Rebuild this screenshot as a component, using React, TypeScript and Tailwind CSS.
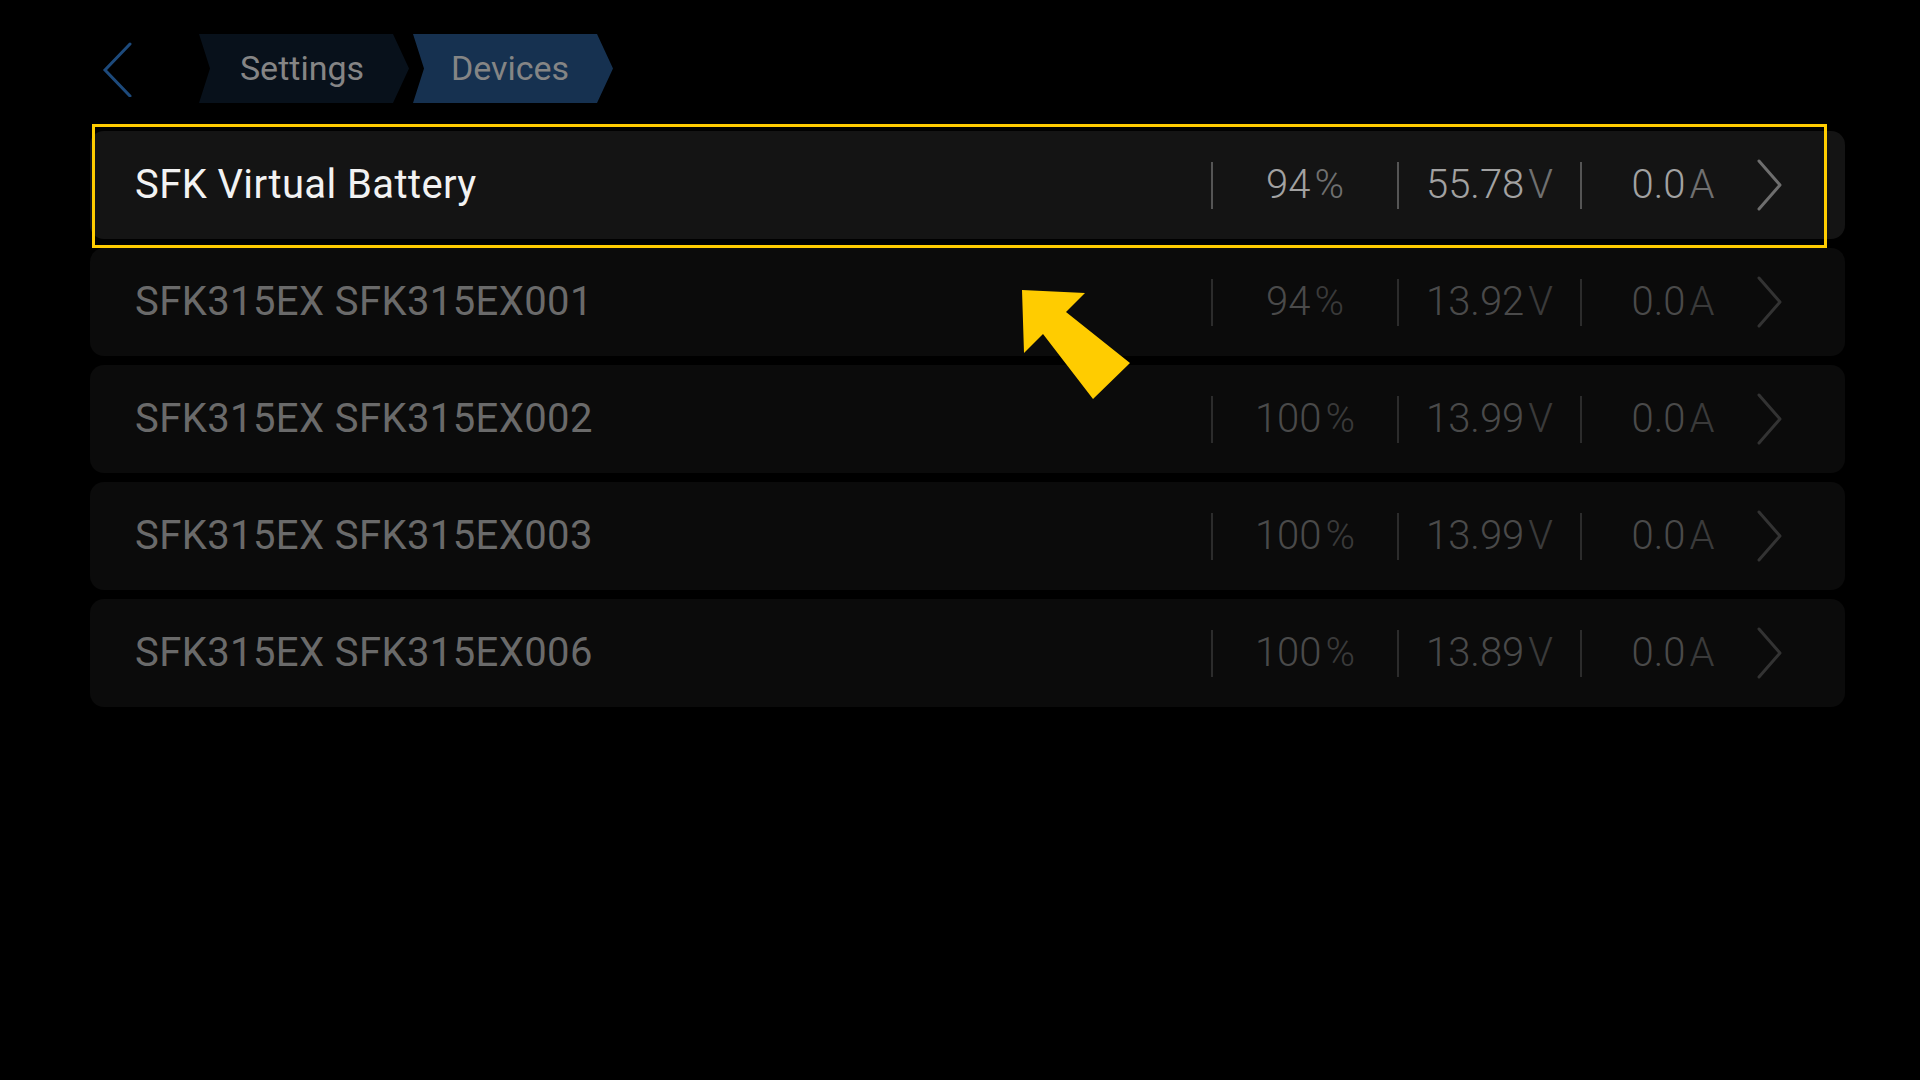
const devices = [
  { name: 'SFK Virtual Battery', soc: '94', volt: '55.78', amp: '0.0', active: true },
  { name: 'SFK315EX SFK315EX001', soc: '94', volt: '13.92', amp: '0.0', active: false },
  { name: 'SFK315EX SFK315EX002', soc: '100', volt: '13.99', amp: '0.0', active: false },
  { name: 'SFK315EX SFK315EX003', soc: '100', volt: '13.99', amp: '0.0', active: false },
  { name: 'SFK315EX SFK315EX006', soc: '100', volt: '13.89', amp: '0.0', active: false },
];

type Device = (typeof devices)[number];

function Value({ num, unit, active }: { num: string; unit: string; active: boolean }) {
  return (
    <span className="font-light">
      <span className={active ? 'text-[#a2a2a2]' : 'text-[#4a4a4a]'}>{num}</span>
      <span className={active ? 'ml-[4px] text-[#707070]' : 'ml-[4px] text-[#3a3a3a]'}>{unit}</span>
    </span>
  );
}

function DeviceRow({ d }: { d: Device }) {
  const sep = d.active ? 'border-[#555555]' : 'border-[#2c2c2c]';
  return (
    <div
      className={
        'flex items-center h-[108px] rounded-[14px] ' + (d.active ? 'bg-[#141414]' : 'bg-[#0b0b0b]')
      }
    >
      <div
        className={
          'flex-1 pl-[45px] text-[40px] tracking-[0.4px] ' + (d.active ? 'text-[#f2f2f2]' : 'text-[#6a6a6a]')
        }
      >
        {d.name}
      </div>
      <div className={'w-[186px] h-[47px] border-l-2 flex items-center justify-center text-[40px] ' + sep}>
        <Value num={d.soc} unit="%" active={d.active} />
      </div>
      <div className={'w-[183px] h-[47px] border-l-2 flex items-center justify-center text-[40px] ' + sep}>
        <Value num={d.volt} unit="V" active={d.active} />
      </div>
      <div className={'w-[176px] h-[47px] border-l-2 flex items-center justify-center pl-[8px] text-[40px] ' + sep}>
        <Value num={d.amp} unit="A" active={d.active} />
      </div>
      <svg width="27" height="54" viewBox="0 0 27 54" className="mr-[62px]">
        <path
          d="M3 3 L24 27 L3 51"
          fill="none"
          stroke={d.active ? '#6e6e6e' : '#333333'}
          strokeWidth="3"
          strokeLinecap="round"
          strokeLinejoin="round"
        />
      </svg>
    </div>
  );
}

export default function App() {
  return (
    <div className="relative w-full h-[1080px] bg-black overflow-hidden font-['Roboto','Liberation_Sans',sans-serif]">
      {/* Header — back + breadcrumbs */}
      <div className="flex items-center h-[69px] mt-[34px]">
        <button className="ml-[100px] w-[36px] h-[69px] flex items-center">
          <svg width="36" height="56" viewBox="0 0 36 56">
            <path d="M30 3 L5 29 L30 55" fill="none" stroke="#1d4a7c" strokeWidth="3" strokeLinecap="round" />
          </svg>
        </button>
        <div className="ml-[63px] flex items-center">
          <div className="w-[210px] h-[69px] bg-[#08111b] flex items-center justify-center pr-[4px] text-[34px] text-[#858585] [clip-path:polygon(0_0,calc(100%_-_16px)_0,100%_50%,calc(100%_-_16px)_100%,0_100%,11px_50%)]">
            Settings
          </div>
          <div className="ml-[4px] w-[200px] h-[69px] bg-[#163150] flex items-center justify-center pr-[6px] text-[34px] text-[#858585] [clip-path:polygon(0_0,calc(100%_-_16px)_0,100%_50%,calc(100%_-_16px)_100%,0_100%,11px_50%)]">
            Devices
          </div>
        </div>
      </div>

      {/* Device list */}
      <div className="mt-[28px] ml-[90px] mr-[75px] flex flex-col gap-[9px]">
        {devices.map((d) => (
          <DeviceRow key={d.name} d={d} />
        ))}
      </div>

      {/* Highlight box */}
      <div className="absolute left-[92px] top-[124px] w-[1735px] h-[124px] border-[3px] border-[#ffcc00] pointer-events-none" />

      {/* Pointer arrow */}
      <svg className="absolute left-[1020px] top-[288px]" width="112" height="113" viewBox="0 0 112 113">
        <polygon points="2,2 65,5 46,24 110,75 73,111 23,46 4,65" fill="#ffcc00" />
      </svg>
    </div>
  );
}
